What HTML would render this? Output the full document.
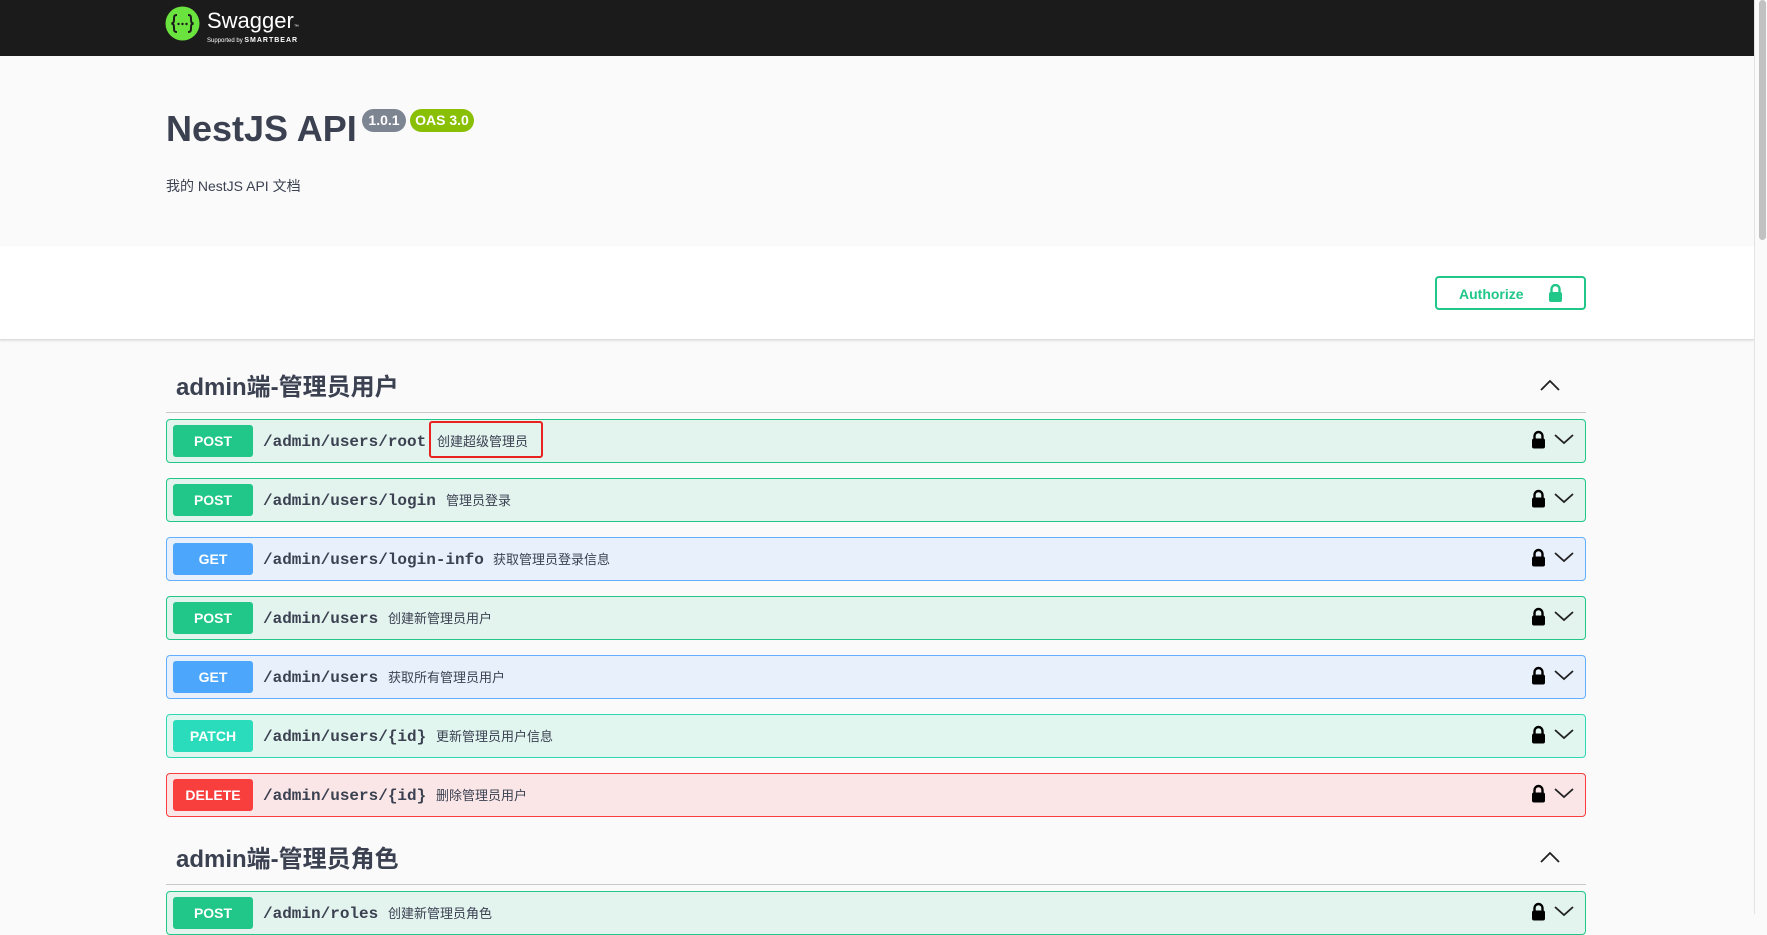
<!DOCTYPE html>
<html><head><meta charset="utf-8"><style>
*{box-sizing:border-box;margin:0;padding:0}
body{width:1767px;height:914px;overflow:hidden;background:#fafafa;font-family:"Liberation Sans","Noto Sans CJK SC",sans-serif;position:relative}
.page{position:absolute;left:0;top:0;width:1754px;height:914px;background:#fafafa}
.sb{position:absolute;left:1754px;top:0;width:13px;height:914px;background:#fafafa;border-left:1px solid #e3e3e3}
.thumb{position:absolute;left:4px;top:0;width:7px;height:240px;background:#c1c1c1;border-radius:4px}
.top{height:56px;background:#1b1b1b;position:relative}
.info{height:190px;background:#fafafa;position:relative}
.h1{position:absolute;left:166px;font-size:36px;font-weight:bold;color:#3b4151}
.badge{position:absolute;height:23px;border-radius:12px;color:#fff;font-weight:bold;font-size:14px;line-height:23px;text-align:center}
.desc{position:absolute;left:166px;font-size:14px;color:#3b4151}
.auth{height:94px;background:#fff;border-bottom:1px solid #ddd;box-shadow:0 1px 2px rgba(0,0,0,.1);position:relative}
.abtn{position:absolute;left:1435px;top:30px;width:151px;height:34px;border:2px solid #20c788;border-radius:4px;color:#20c788;font-weight:bold;font-size:14px}
.tag{position:absolute;left:166px;width:1420px;height:54px;border-bottom:1px solid #c8c8c8}
.tag span{position:absolute;left:10px;top:8px;font-size:24px;font-weight:bold;color:#3b4151}
.tag svg{position:absolute;left:1374px;top:20px}
.op{position:absolute;left:166px;width:1420px;height:44px;border:1px solid;border-radius:4px}
.m{position:absolute;left:6px;top:5px;width:80px;height:32px;border-radius:3px;color:#fff;font-weight:bold;font-size:14px;line-height:32px;text-align:center}
.p{position:absolute;left:96px;top:13px;font-family:"Liberation Mono",monospace;font-weight:bold;font-size:16px;color:#3b4151}
.d{position:absolute;top:11px;font-size:13px;color:#3b4151}
.ic{position:absolute;left:1364px;top:9px}
.post{background:#e3f3ee;border-color:#20c788}.post .m{background:#20c788}
.get{background:#e8f1fb;border-color:#61affe}.get .m{background:#4ba6fc}
.patch{background:#e2f6f0;border-color:#2bd9b5}.patch .m{background:#2bdcbc}
.del{background:#fae6e7;border-color:#f93e3e}.del .m{background:#f93e3e}
</style></head><body>
<div class="page">
<div class="top">
 <svg style="position:absolute;left:165px;top:6px" width="35" height="35" viewBox="0 0 35 35"><circle cx="17.5" cy="17.5" r="17" fill="#6be33f"/>
 <path d="M12 9c-3 0-3 1.5-3 4s0 4-2.5 4.5C9 18 9 19.5 9 22s0 4 3 4" stroke="#1b1b1b" stroke-width="2" fill="none"/>
 <path d="M23 9c3 0 3 1.5 3 4s0 4 2.5 4.5C26 18 26 19.5 26 22s0 4-3 4" stroke="#1b1b1b" stroke-width="2" fill="none"/>
 <circle cx="13.5" cy="18" r="1.2" fill="#1b1b1b"/><circle cx="17.5" cy="18" r="1.2" fill="#1b1b1b"/><circle cx="21.5" cy="18" r="1.2" fill="#1b1b1b"/></svg>
 <div style="position:absolute;left:207px;top:8px;color:#fff;font-size:22px">Swagger<span style="font-size:5px">™</span></div>
 <div style="position:absolute;left:207px;top:37px;color:#fff;font-size:6px">Supported by <b style="font-size:7px;letter-spacing:1px">SMARTBEAR</b></div>
</div>
<div class="info">
 <div class="h1" style="top:52px">NestJS API</div>
 <div class="badge" style="left:362px;top:53px;width:44px;background:#7d8492">1.0.1</div>
 <div class="badge" style="left:410px;top:53px;width:64px;background:#89bf04">OAS 3.0</div>
 <div class="desc" style="top:120px">我的 NestJS API 文档</div>
</div>
<div class="auth">
 <div class="abtn"><span style="position:absolute;left:22px;top:8px">Authorize</span>
 <svg style="position:absolute;left:111px;top:6px" width="15" height="18" viewBox="0 0 15 18"><path d="M3.5 8V5a4 4 0 0 1 8 0v3" stroke="#20c788" stroke-width="2.4" fill="none"/><rect x="1" y="8" width="13" height="10" rx="2" fill="#20c788"/></svg></div>
</div>
</div>

<div class="tag" style="top:359px"><span>admin端-管理员用户</span><svg width="20" height="12" viewBox="0 0 20 12"><path d="M1 11L10 2l9 9" stroke="#222" stroke-width="1.8" fill="none"/></svg></div>

<div class="op post" style="top:419px"><div class="m">POST</div><div class="p">/admin/users/root</div><div class="d" style="left:270px">创建超级管理员</div><div style="position:absolute;left:262px;top:1px;width:114px;height:37px;border:2px solid #e8231f;border-radius:3px"></div>ICON</div>
<div class="op post" style="top:478px"><div class="m">POST</div><div class="p">/admin/users/login</div><div class="d" style="left:279px">管理员登录</div>ICON</div>
<div class="op get" style="top:537px"><div class="m">GET</div><div class="p">/admin/users/login-info</div><div class="d" style="left:326px">获取管理员登录信息</div>ICON</div>
<div class="op post" style="top:596px"><div class="m">POST</div><div class="p">/admin/users</div><div class="d" style="left:221px">创建新管理员用户</div>ICON</div>
<div class="op get" style="top:655px"><div class="m">GET</div><div class="p">/admin/users</div><div class="d" style="left:221px">获取所有管理员用户</div>ICON</div>
<div class="op patch" style="top:714px"><div class="m">PATCH</div><div class="p">/admin/users/{id}</div><div class="d" style="left:269px">更新管理员用户信息</div>ICON</div>
<div class="op del" style="top:773px"><div class="m">DELETE</div><div class="p">/admin/users/{id}</div><div class="d" style="left:269px">删除管理员用户</div>ICON</div>

<div class="tag" style="top:831px"><span>admin端-管理员角色</span><svg width="20" height="12" viewBox="0 0 20 12"><path d="M1 11L10 2l9 9" stroke="#222" stroke-width="1.8" fill="none"/></svg></div>
<div class="op post" style="top:891px"><div class="m">POST</div><div class="p">/admin/roles</div><div class="d" style="left:221px">创建新管理员角色</div>ICON</div>

<div class="sb"><div class="thumb"></div></div>
<script>
document.querySelectorAll('.op').forEach(function(o){o.innerHTML=o.innerHTML.replace('ICON','<svg class="ic" width="45" height="22" viewBox="0 0 45 22"><path d="M3.5 10V7a4 4 0 0 1 8 0v3" stroke="#000" stroke-width="2.4" fill="none"/><rect x="1" y="9.5" width="13" height="10" rx="2" fill="#000"/><path d="M24 6l9 8 9-8" stroke="#222" stroke-width="1.8" fill="none"/></svg>');});
</script>
</body></html>
